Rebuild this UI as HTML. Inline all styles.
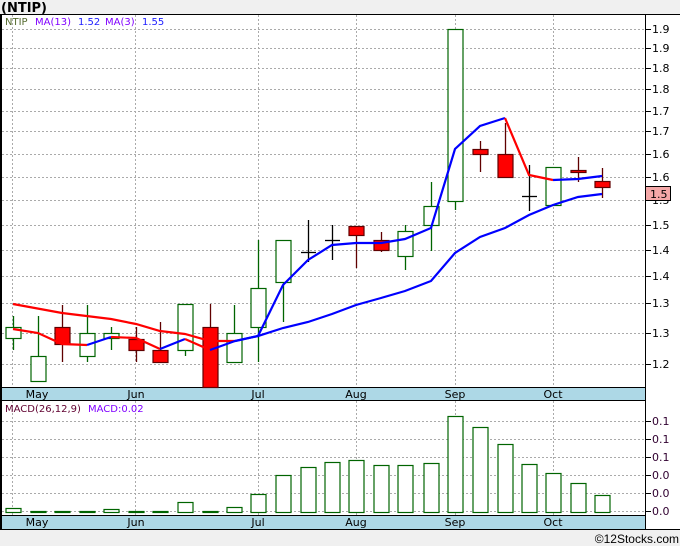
<!DOCTYPE html>
<html><head><meta charset="utf-8"><style>
html,body{margin:0;padding:0;background:#fff;}
svg{display:block;font-family:"DejaVu Sans","Liberation Sans",sans-serif;}
</style></head><body>
<svg id="s" width="680" height="546" viewBox="0 0 680 546" xmlns="http://www.w3.org/2000/svg">
<rect x="0" y="0" width="680" height="546" fill="#fff"/>
<rect x="0" y="0" width="680" height="14" fill="#f0f0f0"/>
<text x="1" y="12" font-size="13" font-weight="bold" fill="#000">(NTIP)</text>
<rect x="0" y="530" width="680" height="16" fill="#f0f0f0"/>
<text x="679" y="543" font-size="12" fill="#000" text-anchor="end" font-family="Liberation Sans,sans-serif">©12Stocks.com</text>
<g id="grid" stroke="#aaa" stroke-width="1" stroke-dasharray="2,2"></g>
<rect x="0.5" y="387.5" width="645" height="13" fill="#add8e6" stroke="#000"/>
<rect x="0.5" y="515.5" width="645" height="14" fill="#add8e6" stroke="#000"/>
<line x1="1" y1="14" x2="1" y2="530" stroke="#000" stroke-width="2"/>
<line x1="645.5" y1="14" x2="645.5" y2="530" stroke="#000"/>
<line x1="0" y1="14.5" x2="680" y2="14.5" stroke="#000"/>
<line x1="0" y1="529.5" x2="680" y2="529.5" stroke="#000"/>
<g font-size="11" fill="#000" text-anchor="middle">
<text x="37" y="398">May</text><text x="136" y="398">Jun</text><text x="258" y="398">Jul</text><text x="356" y="398">Aug</text><text x="455" y="398">Sep</text><text x="553" y="398">Oct</text>
<text x="37" y="526">May</text><text x="136" y="526">Jun</text><text x="258" y="526">Jul</text><text x="356" y="526">Aug</text><text x="455" y="526">Sep</text><text x="553" y="526">Oct</text>
</g>
<g font-size="11" fill="#000">
<text x="652" y="33">1.9</text><text x="652" y="52">1.9</text><text x="652" y="72">1.8</text><text x="652" y="93">1.8</text><text x="652" y="115">1.7</text><text x="652" y="135">1.7</text><text x="652" y="158">1.6</text><text x="652" y="181">1.6</text><text x="652" y="204">1.5</text><text x="652" y="229">1.5</text><text x="652" y="254">1.4</text><text x="652" y="280">1.4</text><text x="652" y="307">1.3</text><text x="652" y="337">1.3</text><text x="652" y="368">1.2</text>
<text x="652" y="425" fill="#300030">0.1</text><text x="652" y="443" fill="#300030">0.1</text><text x="652" y="461" fill="#300030">0.1</text><text x="652" y="479" fill="#300030">0.0</text><text x="652" y="497" fill="#300030">0.0</text><text x="652" y="515" fill="#300030">0.0</text>
</g>
<g font-size="10">
<text x="5" y="25" fill="#556b2f">NTIP</text>
<text x="35" y="25" fill="#8000ff">MA(13)</text><text x="78" y="25" fill="#2020ff">1.52</text>
<text x="105" y="25" fill="#8000ff">MA(3)</text><text x="142" y="25" fill="#2020ff">1.55</text>
<text x="5" y="412" fill="#600030">MACD(26,12,9)</text><text x="88" y="412" fill="#8000ff">MACD:0.02</text>
</g>
<g id="c"></g>
<rect x="645.5" y="186.5" width="25" height="14" fill="#f4a8a8" stroke="#000"/>
<text x="650" y="198" font-size="11" fill="#000">1.5</text>
</svg>
<script>
var NS="http://www.w3.org/2000/svg",g=document.getElementById('grid'),c=document.getElementById('c');
function el(p,t,a){var e=document.createElementNS(NS,t);for(var k in a)e.setAttribute(k,a[k]);p.appendChild(e);return e;}
[12,135,258,356,455,553].forEach(function(x){el(g,'line',{x1:x+.5,y1:15,x2:x+.5,y2:387});el(g,'line',{x1:x+.5,y1:401,x2:x+.5,y2:515});});
[29,48,68,89,111,131,154,177,200,225,250,276,303,333,364].forEach(function(y){el(g,'line',{x1:2,y1:y+.5,x2:645,y2:y+.5});el(c,'line',{x1:645,y1:y+.5,x2:651,y2:y+.5,stroke:'#000'});});
[421,439,457,475,493,511].forEach(function(y){el(g,'line',{x1:2,y1:y+.5,x2:645,y2:y+.5});el(c,'line',{x1:645,y1:y+.5,x2:651,y2:y+.5,stroke:'#000'});});
var C=[[13,327,338,316,350,'g'],[38,356,381,316,381,'g'],[62,327,344,305,362,'r'],[87,333,356,305,362,'g'],[111,333,338,327,350,'g'],[136,339,350,327,362,'r'],[160,350,362,322,362,'r'],[185,304,350,304,356,'g'],[210,327,387,304,387,'r'],[234,333,362,305,362,'g'],[258,288,327,240,362,'g'],[283,240,282,240,322,'g'],[308,252,252,220,262,'k'],[332,240,240,225,260,'k'],[356,226,235,226,268,'r'],[381,240,250,232,252,'r'],[405,231,256,225,270,'g'],[431,206,225,182,251,'g'],[455,29,201,29,210,'g'],[480,149,154,141,172,'r'],[505,154,177,123,177,'r'],[529,196,196,165,211,'k'],[553,167,205,167,205,'g'],[578,170,172,157,182,'r'],[602,181,187,168,198,'r']];
C.forEach(function(d){var x=d[0],col=d[5]=='g'?'#006400':d[5]=='r'?'#600000':'#000';
el(c,'line',{x1:x+.5,y1:d[3],x2:x+.5,y2:d[4],stroke:col,'stroke-width':1.3});
if(d[5]=='k'){el(c,'line',{x1:x-7,y1:d[1]+.5,x2:x+8,y2:d[1]+.5,stroke:'#000','stroke-width':1.3});}
else el(c,'rect',{x:x-7,y:d[1]+.5,width:15,height:Math.max(d[2]-d[1],2),fill:d[5]=='g'?'#fff':'#f00',stroke:col,'stroke-width':1.2});});
function pl(pts,col){el(c,'polyline',{points:pts,fill:'none',stroke:col,'stroke-width':2.2});}
pl('13,304 62,313 111,319 136,324 160,331 185,334 210,341 235,341','#f00');
pl('13,329 38,333 62,344 87,345','#f00');pl('87,345 111,337','#00f');pl('111,337 136,338 160,349','#f00');pl('160,349 185,339','#00f');pl('185,339 210,350','#f00');
pl('210,350 235,341 258,336 283,285 308,260 332,245 356,243 381,243 405,239 431,228 455,149 480,126 505,118','#00f');
pl('505,118 529,175 553,180','#f00');pl('553,180 578,179 602,176','#00f');
pl('235,341 258,336 283,328 308,322 332,314 356,305 381,298 405,291 431,281 455,253 480,237 505,228 529,215 553,205 578,197 602,194','#00f');
var M=[[13,508],[38,511],[62,511],[87,511],[111,509],[136,511],[160,511],[185,502],[210,511],[234,507],[258,494],[283,475],[308,467],[332,462],[356,460],[381,465],[405,465],[431,463],[455,416],[480,427],[505,444],[529,464],[553,473],[578,483],[602,495]];
M.forEach(function(d){el(c,'rect',{x:d[0]-7,y:d[1]+.5,width:15,height:Math.max(512-d[1],1),fill:'#fff',stroke:'#006400','stroke-width':1.2});});
</script>
</body></html>
